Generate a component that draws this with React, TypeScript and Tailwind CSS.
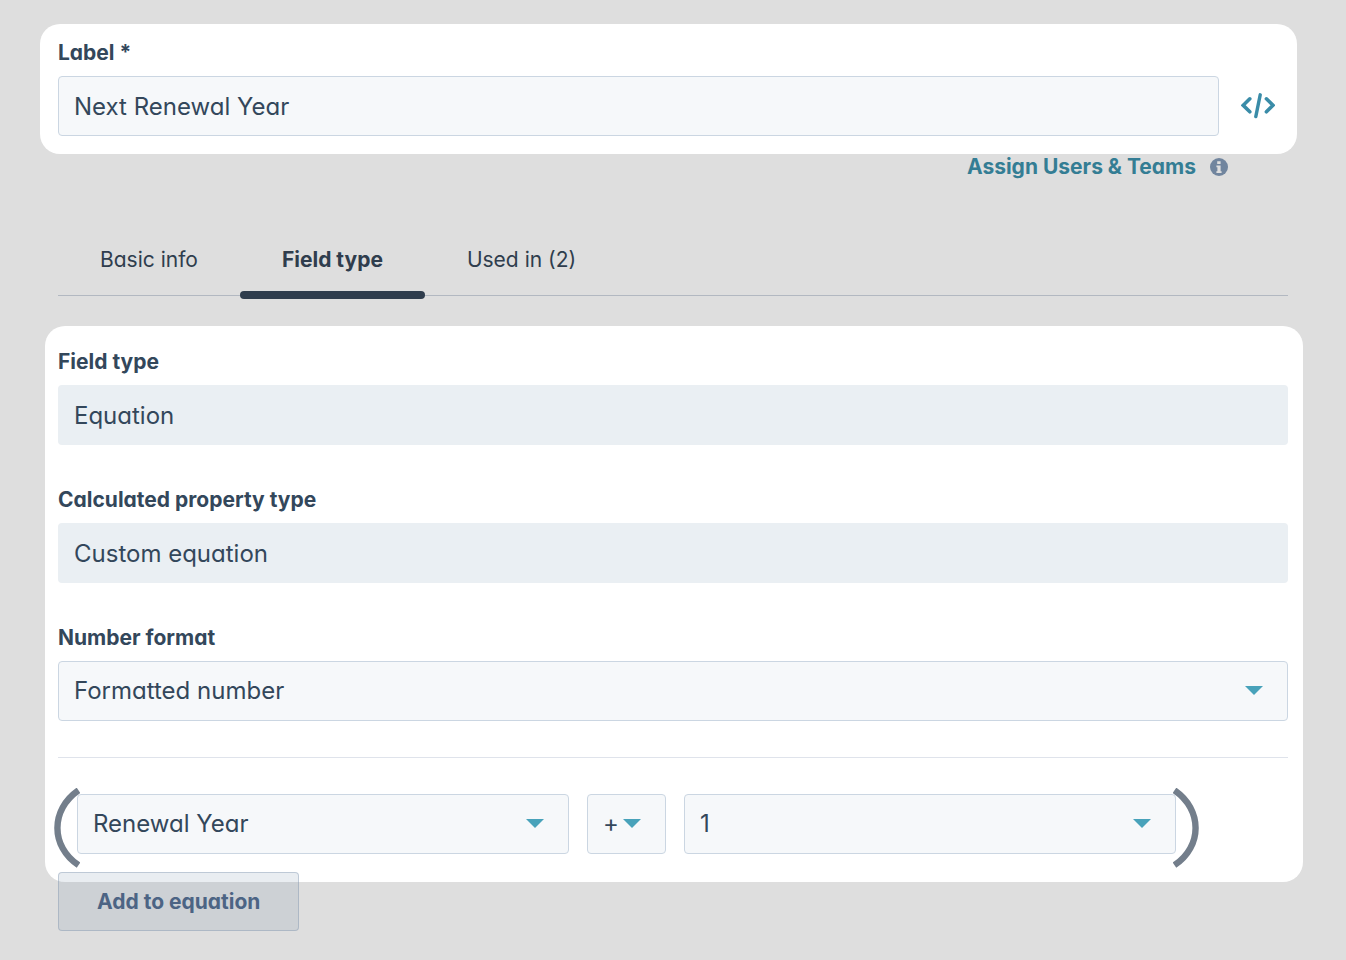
import { useState } from "react";
import type { ReactNode } from "react";

const tabs = ["Basic info", "Field type", "Used in (2)"];

const Caret = ({ className }: { className: string }) => (
  <svg
    className={`pointer-events-none absolute top-[25px] ${className}`}
    width="18"
    height="9"
    viewBox="0 0 18 9"
    aria-hidden="true"
  >
    <path d="M0 0h18L9 9z" fill="#48a2ba" />
  </svg>
);

const CodeIcon = () => (
  <svg width="34" height="26" viewBox="0 0 34 26" fill="none" stroke="#3a8ca8" strokeLinecap="round" aria-hidden="true">
    <path d="M8.8 5.8L2.2 12.3l6.6 6.5M25.4 5.8l6.6 6.5-6.6 6.5" strokeWidth="3.6" strokeLinejoin="miter" />
    <path d="M19.2 1.8l-4.4 21.8" strokeWidth="3.4" />
  </svg>
);

const InfoIcon = () => (
  <svg width="18" height="18" viewBox="0 0 18 18" aria-hidden="true">
    <circle cx="9" cy="9" r="9" fill="#71859e" />
    <path d="M7.2 3.2h3.4v2.9H7.2zM6.4 7.6h4.2v5.6h1v1.7H6.4v-1.7h1V9.2h-1z" fill="#dedede" />
  </svg>
);

const Paren = ({ className }: { className: string }) => (
  <svg
    className={`pointer-events-none absolute top-1/2 -translate-y-1/2 ${className}`}
    width="26"
    height="80"
    viewBox="0 0 26 80"
    fill="none"
    aria-hidden="true"
  >
    <path d="M24.5 2.3C-3.6 21.5-3.6 58.5 24.5 77.2" stroke="#737e8b" strokeWidth="6.4" />
  </svg>
);

const FieldLabel = ({ id, children }: { id: string; children: ReactNode }) => (
  <label htmlFor={id} className="block text-[21px] leading-7 font-[650]">
    {children}
  </label>
);

const ReadOnlyField = ({ id, label, value }: { id: string; label: string; value: string }) => (
  <div>
    <FieldLabel id={id}>{label}</FieldLabel>
    <input
      id={id}
      readOnly
      value={value}
      className="mt-[9px] block h-[60px] w-full rounded bg-[#eaeff3] px-4 text-2xl font-normal outline-none"
    />
  </div>
);

type SelectProps = {
  id?: string;
  label?: string;
  options: string[];
  className: string;
  selectClass?: string;
  caretClass: string;
};

const Select = ({ id, label, options, className, selectClass = "px-[15px]", caretClass }: SelectProps) => (
  <div className={`relative ${className}`}>
    <select
      id={id}
      aria-label={label}
      className={`block h-[60px] w-full appearance-none rounded border border-[#cbd6e2] bg-[#f6f8fa] text-2xl font-normal outline-none ${selectClass}`}
    >
      {options.map((e) => (
        <option key={e}>{e}</option>
      ))}
    </select>
    <Caret className={caretClass} />
  </div>
);

const App = () => {
  const [active, setActive] = useState("Field type");
  const [name, setName] = useState("Next Renewal Year");

  return (
    <main className="min-h-screen bg-[#dedede] pt-6 pb-7 font-['Inter','Liberation_Sans',sans-serif] text-[#33475b] [font-feature-settings:'cv11']">
      <section className="mr-[49px] ml-10 rounded-[20px] bg-white pt-[15px] pr-[22px] pb-[18px] pl-[18px]">
        <FieldLabel id="label">Label *</FieldLabel>
        <div className="mt-[9px] flex items-center gap-[22px]">
          <input
            id="label"
            value={name}
            onChange={(e) => setName(e.target.value)}
            className="h-[60px] min-w-0 flex-1 rounded border border-[#cbd6e2] bg-[#f6f8fa] px-[15px] text-2xl font-normal outline-none"
          />
          <button type="button" aria-label="Internal name">
            <CodeIcon />
          </button>
        </div>
      </section>

      <div className="mt-px mr-[118px] flex items-center justify-end gap-[14px]">
        <a href="#assign" className="text-[21px] leading-6 font-[650] text-[#347d94]">
          Assign Users &amp; Teams
        </a>
        <InfoIcon />
      </div>

      <nav className="mt-[67px] mr-[58px] ml-[58px] flex border-b border-[#b2b8c1]">
        {tabs.map((tab) => (
          <button
            key={tab}
            type="button"
            onClick={() => setActive(tab)}
            className={`relative px-[42px] pb-[21px] text-[21px] leading-7 text-[#2f3d4d] ${
              tab === active ? "font-bold" : "font-normal"
            }`}
          >
            {tab}
            {tab === active && <span className="absolute inset-x-0 -bottom-1 h-2 rounded-full bg-[#2f3d4d]" />}
          </button>
        ))}
      </nav>

      <section className="mt-[30px] mr-[43px] ml-[45px] rounded-[20px] bg-white pt-[22px] pr-[15px] pb-7 pl-[13px]">
        <div className="flex flex-col gap-[41px]">
          <ReadOnlyField id="field-type" label="Field type" value="Equation" />
          <ReadOnlyField id="calculated-type" label="Calculated property type" value="Custom equation" />
          <div>
            <FieldLabel id="number-format">Number format</FieldLabel>
            <Select
              id="number-format"
              options={["Formatted number", "Unformatted number", "Currency", "Percentage"]}
              className="mt-[9px]"
              caretClass="right-[25px]"
            />
          </div>
        </div>
        <hr className="my-9 border-[#dfe3eb]" />
        <div className="relative mr-[112px] ml-[19px] flex gap-[18px]">
          <Select label="First property" options={["Renewal Year"]} className="min-w-0 flex-1" caretClass="right-[25px]" />
          <Select
            label="Operator"
            options={["+", "-", "*", "/"]}
            className="w-[79px]"
            selectClass="pl-[15px]"
            caretClass="right-[25px]"
          />
          <Select label="Second value" options={["1"]} className="min-w-0 flex-1" caretClass="right-[25px]" />
          <Paren className="-left-[23px] mt-1" />
          <Paren className="-right-[23px] mt-1 -scale-x-100" />
        </div>
      </section>

      <button
        type="button"
        className="relative -mt-[10px] ml-[58px] block h-[59px] rounded border border-[#7d92ac]/40 bg-[#6b84a2]/15 px-[38px] text-[21px] font-[650] text-[#4c6484]"
      >
        Add to equation
      </button>
    </main>
  );
};

export default App;
